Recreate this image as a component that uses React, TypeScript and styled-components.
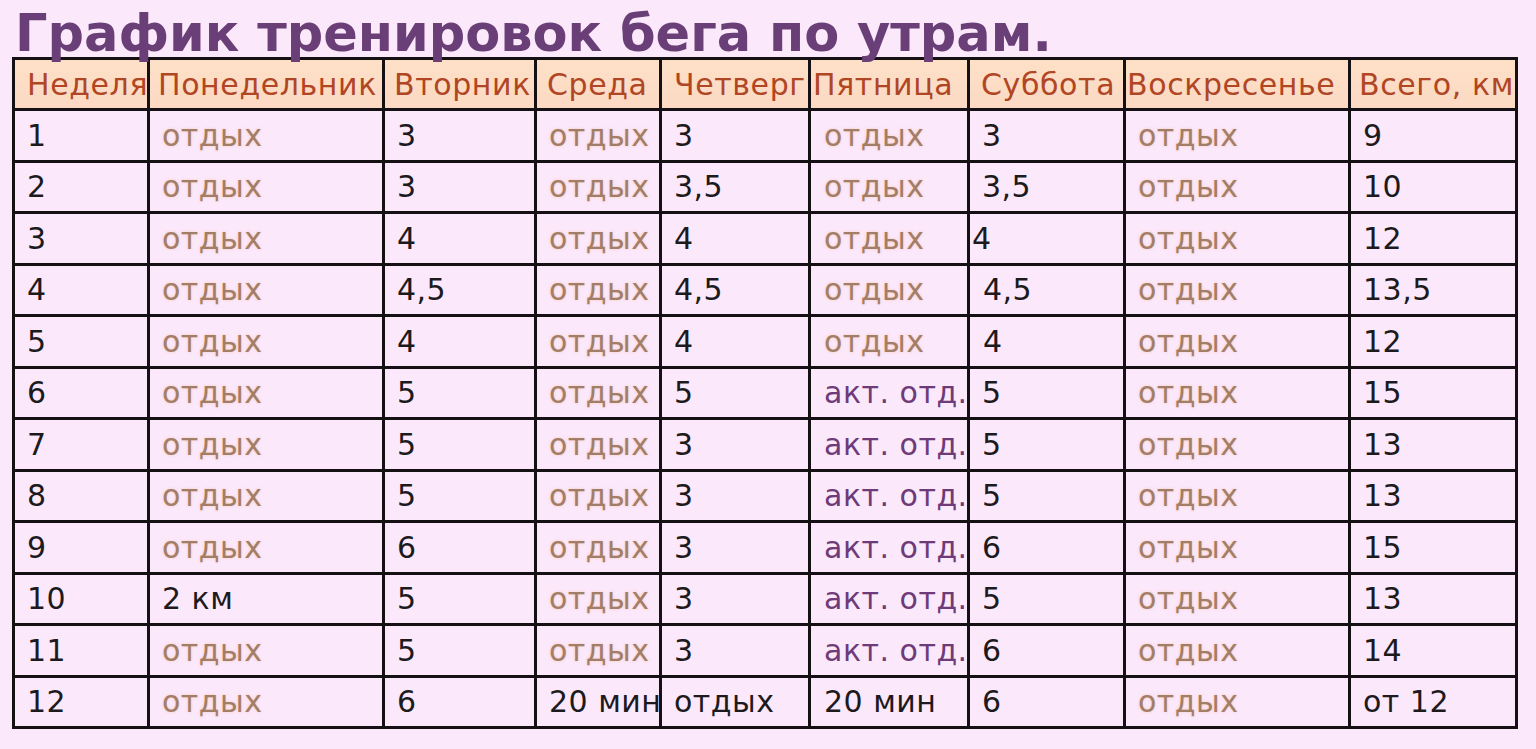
import React, { FC } from 'react';
import styled, { createGlobalStyle } from 'styled-components';

const GlobalStyle = createGlobalStyle`
  html, body {
    margin: 0;
    padding: 0;
    background: #fbe8fb;
  }
  body {
    font-family: "DejaVu Sans", Verdana, sans-serif;
  }
`;

const Page = styled.div`
  padding: 0 0 0 12px;
`;

const Title = styled.h1`
  position: relative;
  z-index: 1;
  margin: 0 0 -11px 3px;
  font-family: "DejaVu Sans", Verdana, sans-serif;
  font-weight: 700;
  font-size: 51px;
  line-height: 68px;
  color: #6a3f78;
  white-space: nowrap;
`;

const Table = styled.table`
  border-collapse: collapse;
  table-layout: fixed;
  width: 1506px;
`;

const HeadCell = styled.th<{ $indent?: number }>`
  height: 48px;
  padding: 0 0 0 ${p => p.$indent ?? 11}px;
  border: 3px solid #141014;
  background: linear-gradient(#fde0c6, #fcd9c4);
  color: #b04624;
  font-size: 30px;
  font-weight: 400;
  letter-spacing: 0.6px;
  text-align: left;
  white-space: nowrap;
  overflow: hidden;
`;

type Tone = 'num' | 'rest' | 'active';

const toneColor: Record<Tone, string> = {
  num: '#1c1a1c',
  rest: '#a27e68',
  active: '#6e3a78',
};

const Cell = styled.td<{ $tone: Tone; $indent?: number }>`
  height: 48.5px;
  padding: 0 0 0 ${p => p.$indent ?? 12}px;
  border: 3px solid #141014;
  color: ${p => toneColor[p.$tone]};
  text-shadow: ${p => (p.$tone === 'rest' ? '0 0 3px rgba(250, 170, 110, 0.45)' : 'none')};
  font-size: 30px;
  letter-spacing: 0.5px;
  white-space: nowrap;
  overflow: hidden;
`;

const columns = [
  { title: 'Неделя', width: 135, indent: 12 },
  { title: 'Понедельник', width: 235, indent: 8 },
  { title: 'Вторник', width: 152, indent: 9 },
  { title: 'Среда', width: 125, indent: 10 },
  { title: 'Четверг', width: 149, indent: 12 },
  { title: 'Пятница', width: 159, indent: 2 },
  { title: 'Суббота', width: 156, indent: 11 },
  { title: 'Воскресенье', width: 225, indent: 1 },
  { title: 'Всего, км', width: 167, indent: 8 },
];

const R = 'отдых';
const A = 'акт. отд.';

// [week, mon, tue, wed, thu, fri, sat, sun, total]
const rows: string[][] = [
  ['1', R, '3', R, '3', R, '3', R, '9'],
  ['2', R, '3', R, '3,5', R, '3,5', R, '10'],
  ['3', R, '4', R, '4', R, '4', R, '12'],
  ['4', R, '4,5', R, '4,5', R, '4,5', R, '13,5'],
  ['5', R, '4', R, '4', R, '4', R, '12'],
  ['6', R, '5', R, '5', A, '5', R, '15'],
  ['7', R, '5', R, '3', A, '5', R, '13'],
  ['8', R, '5', R, '3', A, '5', R, '13'],
  ['9', R, '6', R, '3', A, '6', R, '15'],
  ['10', '2 км', '5', R, '3', A, '5', R, '13'],
  ['11', R, '5', R, '3', A, '6', R, '14'],
  ['12', R, '6', '20 мин', 'отдых*', '20 мин', '6', R, 'от 12'],
];

// small per-cell offsets seen in the original (row index, column index) -> indent
const oddIndents: Record<string, number> = {
  '2-6': 2,
  '3-6': 13,
  '4-6': 13,
};

const toneOf = (value: string): Tone => {
  if (value === R) return 'rest';
  if (value === A) return 'active';
  return 'num';
};

const App: FC = () => (
  <>
    <GlobalStyle />
    <Page>
      <Title>График тренировок бега по утрам.</Title>
      <Table>
        <colgroup>
          {columns.map(c => (
            <col key={c.title} style={{ width: c.width }} />
          ))}
        </colgroup>
        <thead>
          <tr>
            {columns.map(c => (
              <HeadCell key={c.title} $indent={c.indent}>{c.title}</HeadCell>
            ))}
          </tr>
        </thead>
        <tbody>
          {rows.map((row, ri) => (
            <tr key={row[0]}>
              {row.map((value, ci) => {
                // "отдых*" marks the plain, dark "отдых" in the last row
                const text = value.replace('*', '');
                const tone = value.endsWith('*') ? 'num' : toneOf(value);
                return (
                  <Cell key={ci} $tone={tone} $indent={oddIndents[`${ri}-${ci}`] ?? (ci === 5 ? 13 : 12)}>
                    {text}
                  </Cell>
                );
              })}
            </tr>
          ))}
        </tbody>
      </Table>
    </Page>
  </>
);

export default App;
